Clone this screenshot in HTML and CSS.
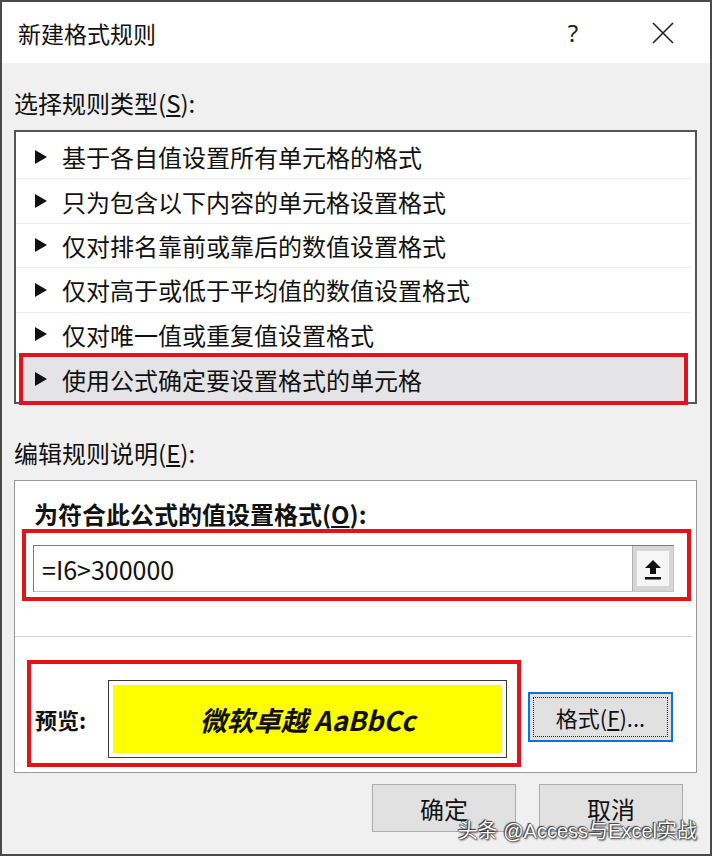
FILE: index.html
```html
<!DOCTYPE html>
<html lang="zh-CN">
<head>
    <meta charset="UTF-8">
    <meta name="viewport" content="width=device-width, initial-scale=1.0">
    <title>新建格式规则</title>
    <link rel="stylesheet" href="styles.css">
</head>
<body>
    <div class="dialog">
        <div class="titlebar">
            <span class="title">新建格式规则</span>
            <span class="help">?</span>
            <span class="close">
                <svg width="22" height="22" viewBox="0 0 22 22"><path d="M1 1 L21 21 M21 1 L1 21" stroke="#222" stroke-width="1.6" fill="none"/></svg>
            </span>
        </div>

        <div class="content">
            <div class="label first">选择规则类型(<u>S</u>):</div>
            <ul class="rule-list">
                <li class="rule"><svg class="arrow" viewBox="0 0 12 14"><polygon points="0,0 12,7 0,14"/></svg>基于各自值设置所有单元格的格式</li>
                <li class="rule"><svg class="arrow" viewBox="0 0 12 14"><polygon points="0,0 12,7 0,14"/></svg>只为包含以下内容的单元格设置格式</li>
                <li class="rule"><svg class="arrow" viewBox="0 0 12 14"><polygon points="0,0 12,7 0,14"/></svg>仅对排名靠前或靠后的数值设置格式</li>
                <li class="rule"><svg class="arrow" viewBox="0 0 12 14"><polygon points="0,0 12,7 0,14"/></svg>仅对高于或低于平均值的数值设置格式</li>
                <li class="rule"><svg class="arrow" viewBox="0 0 12 14"><polygon points="0,0 12,7 0,14"/></svg>仅对唯一值或重复值设置格式</li>
                <li class="rule selected"><svg class="arrow" viewBox="0 0 12 14"><polygon points="0,0 12,7 0,14"/></svg>使用公式确定要设置格式的单元格</li>
            </ul>

            <div class="label second">编辑规则说明(<u>E</u>):</div>
            <div class="edit-panel">
                <div class="formula-label">为符合此公式的值设置格式(<u>O</u>):</div>
                <div class="mark formula-mark">
                    <div class="formula-input">
                        <span class="formula-text">=I6&gt;300000</span>
                        <span class="collapse-btn">
                            <span class="collapse-face">
                                <svg width="20" height="24" viewBox="0 0 20 24"><polygon points="10,3 2,11 7,11 7,17 13,17 13,11 18,11" fill="#111"/><rect x="2" y="20" width="16" height="2.5" fill="#111"/></svg>
                            </span>
                        </span>
                    </div>
                </div>
                <hr class="divider">
                <div class="preview-row">
                    <div class="mark preview-mark">
                        <span class="preview-label">预览:</span>
                        <div class="preview-box">
                            <div class="preview-fill">微软卓越 AaBbCc</div>
                        </div>
                    </div>
                    <button class="btn format-btn"><span class="focus">格式(<u>F</u>)...</span></button>
                </div>
            </div>

            <div class="actions">
                <button class="btn">确定</button>
                <button class="btn">取消</button>
            </div>
        </div>

        <div class="watermark">头条 @Access与Excel实战</div>
    </div>
</body>
</html>
```

FILE: styles.css
```css
body {
    margin: 0;
    font-family: "Noto Sans CJK SC", "Noto Sans", sans-serif;
    color: #111;
}
.dialog {
    position: relative;
    width: 712px;
    height: 856px;
    box-sizing: border-box;
    border: 2px solid #4a4a4a;
    background-color: #f0f0f0;
}
.titlebar {
    display: flex;
    align-items: center;
    height: 61px;
    padding: 0 24px 0 16px;
    background-color: #fff;
}
.title {
    font-size: 23px;
    line-height: 30px;
}
.help {
    margin-left: auto;
    margin-right: 44px;
    width: 46px;
    text-align: center;
    font-family: "Noto Sans", sans-serif;
    font-size: 24px;
    line-height: 30px;
    color: #222;
}
.close {
    display: flex;
    justify-content: center;
    width: 46px;
}
.content {
    padding: 0 13px 0 12px;
}
.label {
    font-size: 24px;
    line-height: 30px;
    margin-bottom: 12px;
}
.label.first {
    margin-top: 25px;
}
.label.second {
    margin-top: 34px;
}
.rule-list {
    list-style: none;
    margin: 0;
    padding: 3px 0 1px;
    border: 2px solid #555;
    background-color: #fff;
}
.rule {
    display: flex;
    align-items: center;
    box-sizing: border-box;
    height: 44.4px;
    padding-left: 19px;
    margin-right: 4px;
    font-size: 24px;
    border-bottom: 1px solid #ededed;
}
.arrow {
    width: 12px;
    height: 14px;
    margin-right: 15px;
    fill: #111;
}
.rule.selected {
    margin: 0 11px 0 7px;
    padding-left: 12px;
    border-bottom: none;
    background-color: #e4e4e6;
    outline: 4px solid #e4121b;
}
.edit-panel {
    box-sizing: border-box;
    height: 293px;
    padding: 18px 4px 4px 7px;
    background-color: #fff;
    border: 1px solid #9a9a9a;
}
.formula-label {
    margin-left: 12px;
    font-size: 24px;
    font-weight: bold;
    line-height: 30px;
}
.mark {
    border: 4px solid #e4121b;
}
.formula-mark {
    margin-right: 1px;
    padding: 12px 13px 5px 7px;
}
.formula-input {
    display: flex;
    align-items: center;
    box-sizing: border-box;
    height: 47px;
    border: 1px solid #7a7a7a;
    border-right-color: #c4c4c4;
    border-bottom-color: #c4c4c4;
}
.formula-text {
    padding-left: 8px;
    font-size: 25px;
}
.collapse-btn {
    display: flex;
    box-sizing: border-box;
    margin-left: auto;
    width: 41px;
    height: 100%;
    padding: 5px 4px;
    background-color: #d6d6d6;
    border-left: 1px solid #b0b0b0;
}
.collapse-face {
    display: flex;
    align-items: center;
    justify-content: center;
    flex: 1;
    background-color: #f6f6f6;
}
.divider {
    margin: 35px 0 0 -7px;
    border: none;
    border-top: 1px solid #cfcfcf;
}
.preview-row {
    display: flex;
    align-items: center;
    margin-top: 23px;
}
.preview-mark {
    display: flex;
    align-items: center;
    margin-left: 5px;
    width: 494px;
    height: 107px;
    box-sizing: border-box;
    padding: 16px 10px 5px 4px;
}
.preview-label {
    width: 73px;
    font-size: 22px;
    font-weight: bold;
}
.preview-box {
    box-sizing: border-box;
    width: 399px;
    height: 78px;
    padding: 4px;
    border: 1px solid #3a3a3a;
    background-color: #fff;
}
.preview-fill {
    display: flex;
    align-items: center;
    justify-content: center;
    height: 100%;
    background-color: #ffff00;
    font-size: 27px;
    font-weight: bold;
    font-style: italic;
}
.btn {
    box-sizing: border-box;
    width: 144px;
    height: 48px;
    padding: 0;
    font-family: inherit;
    font-size: 24px;
    color: #111;
    background-color: #e1e1e1;
    border: 1px solid #adadad;
}
.format-btn {
    display: flex;
    margin: 7px 0 0 7px;
    width: 145px;
    height: 50px;
    padding: 3px;
    font-size: 22px;
    border: 2px solid #0a74d8;
}
.focus {
    flex: 1;
    display: flex;
    align-items: center;
    justify-content: center;
    border: 1px dotted #222;
}
.actions {
    display: flex;
    justify-content: flex-end;
    gap: 23px;
    margin-top: 11px;
    padding-right: 14px;
}
.watermark {
    position: absolute;
    right: 13px;
    bottom: 10px;
    font-family: "Liberation Sans", "Noto Sans CJK SC", sans-serif;
    font-size: 20px;
    line-height: 26px;
    color: #fff;
    text-shadow: 0 0 1px #000, 1px 1px 2px #222, -1px -1px 1px #444;
}
```
